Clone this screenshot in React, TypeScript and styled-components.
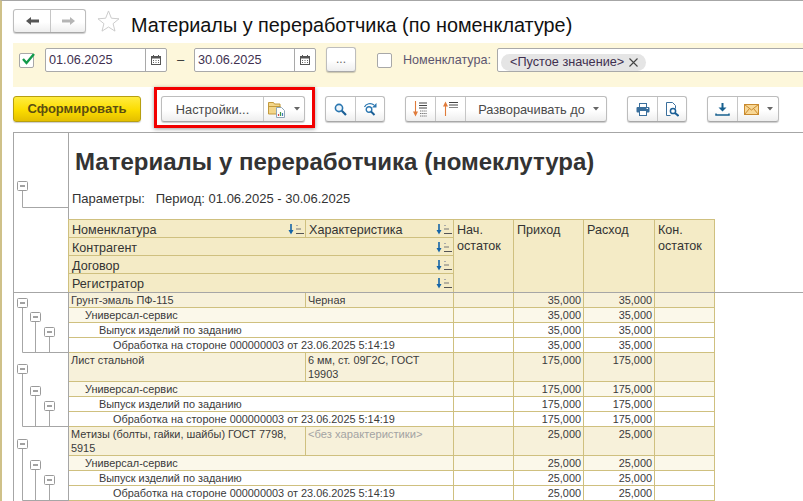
import React from "react";
import styled, { createGlobalStyle } from "styled-components";

const Global = createGlobalStyle`
  html, body { margin: 0; padding: 0; background: #fff; }
  body { font-family: "Liberation Sans", Arial, sans-serif; color: #333; }
  * { box-sizing: border-box; }
`;

const Page = styled.div`
  position: relative;
  width: 803px;
  height: 501px;
  overflow: hidden;
  background: #fff;
  border-top: 1px solid #a6a6a6;
  border-left: 2px solid #cfc189;
  display: flex;
  flex-direction: column;
`;
const TitleBar = styled.div`
  height: 42px;
  padding: 8px 0 0 11px;
  display: flex;
  align-items: flex-start;
`;
const Group = styled.div<{ $w: number; $ml?: number }>`
  position: relative;
  display: flex;
  flex: none;
  width: ${(p) => p.$w}px;
  height: 26px;
  margin-left: ${(p) => p.$ml ?? 0}px;
  border: 1px solid #bdbdbd;
  border-bottom-color: #a8a8a8;
  border-radius: 3px;
  background: linear-gradient(#fff, #fff 55%, #eeeeee);
  box-shadow: 0 1px 1px rgba(0, 0, 0, 0.2);
`;
const NavGroup = styled(Group)`
  height: 24px;
`;
const Seg = styled.div<{ $w?: number; $gap?: number; $pl?: number }>`
  ${(p) => (p.$w ? `width: ${p.$w}px; flex: none;` : "flex: 1;")}
  display: flex;
  align-items: center;
  justify-content: center;
  gap: ${(p) => p.$gap ?? 6}px;
  padding-left: ${(p) => p.$pl ?? 0}px;
  font-size: 12.8px;
  color: #4a4a4a;
  white-space: nowrap;
  & + & { border-left: 1px solid #c6c6c6; }
`;
const StarIcon = styled.svg`
  margin: 1px 0 0 11px;
  flex: none;
`;
const Title = styled.div`
  margin: 4px 0 0 11px;
  font-size: 19.84px;
  line-height: 24px;
  color: #111;
  white-space: nowrap;
`;
const FilterBar = styled.div`
  margin-left: 11px;
  height: 44px;
  background: #fdf7db;
  padding: 5px 0 0 6px;
  display: flex;
  align-items: flex-start;
`;
const CheckBox = styled.div<{ $ml?: number }>`
  width: 15px;
  height: 15px;
  margin: 5px 0 0 ${(p) => p.$ml ?? 0}px;
  flex: none;
  position: relative;
  border: 1px solid #a8a8a8;
  border-radius: 2px;
  background: #fff;
`;
const CheckMark = styled.svg`
  position: absolute;
  left: 1px;
  top: -2px;
`;
const DateInput = styled.div<{ $ml: number }>`
  width: 122px;
  height: 24px;
  margin-left: ${(p) => p.$ml}px;
  flex: none;
  display: flex;
  background: #fff;
  border: 1px solid #a9a9a9;
  border-radius: 2px;
`;
const DateText = styled.div`
  flex: 1;
  padding-left: 3px;
  font-size: 12.7px;
  line-height: 22px;
  color: #40304f;
`;
const CalBtn = styled.div`
  width: 21px;
  border-left: 1px solid #a9a9a9;
  display: flex;
  align-items: center;
  justify-content: center;
`;
const Dash = styled.div`
  width: 27px;
  flex: none;
  text-align: center;
  font-size: 13px;
  line-height: 24px;
  color: #333;
`;
const MoreBtn = styled(Group)`
  height: 25px;
  margin-top: -1px;
  justify-content: center;
  font-size: 12px;
  line-height: 22px;
  color: #666;
`;
const FieldLabel = styled.div`
  margin: 0 0 0 11px;
  width: 94px;
  flex: none;
  font-size: 12.6px;
  line-height: 24px;
  color: #5d5670;
  white-space: nowrap;
`;
const TextField = styled.div`
  flex: 1;
  height: 24px;
  margin-right: -4px;
  background: #fff;
  border: 1px solid #a9a9a9;
  border-radius: 2px;
  padding: 3px 0 0 3px;
`;
const Chip = styled.div`
  display: inline-flex;
  align-items: center;
  gap: 5px;
  height: 17px;
  width: 145px;
  padding-left: 9px;
  background: #e5e5e5;
  border-radius: 9px;
  font-size: 12.7px;
  color: #40304f;
  white-space: nowrap;
`;
const Toolbar = styled.div`
  height: 45px;
  margin-left: 11px;
  padding-top: 9px;
  display: flex;
  align-items: flex-start;
`;
const PrimaryButton = styled.div`
  width: 128px;
  height: 26px;
  flex: none;
  border: 1px solid #b79f10;
  border-radius: 3px;
  background: linear-gradient(#ffec3f, #fbdc00 55%, #e4bf00);
  color: #5b4d12;
  font-weight: bold;
  font-size: 13px;
  line-height: 24px;
  text-align: center;
  box-shadow: 0 1px 1px rgba(0, 0, 0, 0.2);
`;
const SettingsGroup = styled(Group)`
  &::after {
    content: "";
    position: absolute;
    inset: -10px -11px -7px -8px;
    border: 3.5px solid #f20000;
    box-shadow: 0 1px 4px rgba(0, 0, 0, 0.4);
    pointer-events: none;
  }
`;
const Report = styled.div`
  margin-left: 11px;
  flex: 1;
  border-top: 1px solid #a6a6a6;
  border-left: 1px solid #a6a6a6;
`;
const HeadSection = styled.div`
  display: flex;
  border-bottom: 1px solid #a6a6a6;
`;
const Gutter = styled.div`
  width: 55px;
  flex: none;
  border-right: 1px solid #a6a6a6;
  display: flex;
`;
const HeadMain = styled.div`
  flex: 1;
`;
const ReportTitleBlock = styled.div`
  height: 87px;
  padding: 14px 0 0 6px;
`;
const ReportTitle = styled.div`
  font-size: 24px;
  line-height: 30px;
  font-weight: bold;
  color: #333;
  white-space: nowrap;
`;
const Params = styled.div`
  margin: 14px 0 0 -3px;
  font-size: 13px;
  line-height: 16px;
  color: #333;
  white-space: pre;
`;
const HeaderGrid = styled.div`
  display: grid;
  grid-template-columns: 237px 148px 60px 70px 71px 60px;
  grid-template-rows: repeat(4, 18px);
  width: 647px;
  border-top: 1px solid #cfc07f;
  margin-top: -1px;
  border-left: 1px solid #cfc07f;
  margin-left: -1px;
  background: #f4ebc6;
`;
const HeadCell = styled.div<{ $span?: number; $rows?: number; $last?: boolean }>`
  grid-column: span ${(p) => p.$span ?? 1};
  grid-row: span ${(p) => p.$rows ?? 1};
  display: flex;
  align-items: flex-start;
  justify-content: space-between;
  padding: 2px 0 0 3px;
  border-right: 1px solid #cfc07f;
  border-bottom: ${(p) => (p.$last ? "0" : "1px solid #cfc07f")};
  font-size: 12.6px;
  line-height: 16px;
  color: #333;
  white-space: pre-line;
`;
const SortIcon = styled.svg`
  flex: none;
  margin: 2px 0 0 0;
`;
const DataGroup = styled.div`
  display: flex;
`;
const Rows = styled.div`
  width: 646px;
  flex: none;
`;
const Row = styled.div<{ $level: number; $h: number }>`
  display: grid;
  grid-template-columns: 237px 148px 60px 70px 71px 60px;
  height: ${(p) => p.$h}px;
  background: ${(p) => (p.$level === 0 ? "#f7f1da" : p.$level === 1 ? "#fbf8ea" : "#fff")};
  border-bottom: 1px solid #cfc07f;
`;
const Cell = styled.div<{ $span?: number; $indent?: number; $right?: boolean }>`
  grid-column: span ${(p) => p.$span ?? 1};
  border-right: 1px solid #cfc07f;
  padding: 0 2px 0 ${(p) => 2 + (p.$indent ?? 0)}px;
  font-size: 10.9px;
  line-height: 14px;
  text-align: ${(p) => (p.$right ? "right" : "left")};
  color: #3a3a3a;
  overflow: hidden;
`;
const CharCell = styled(Cell)<{ $muted?: boolean }>`
  padding: 0 4px 0 2px;
  font-size: ${(p) => (p.$muted ? 11.2 : 10.9)}px;
  color: ${(p) => (p.$muted ? "#a3a3a3" : "#3a3a3a")};
`;

const Arrow = ({ dir, color }: { dir: "l" | "r"; color: string }) => (
  <svg width="15" height="10" viewBox="0 0 15 10">
    <path
      d={dir === "l" ? "M1 5 L6 1 V3.5 H14 V6.5 H6 V9 Z" : "M14 5 L9 1 V3.5 H1 V6.5 H9 V9 Z"}
      fill={color}
    />
  </svg>
);
const Caret = () => (
  <svg width="6" height="4" viewBox="0 0 6 4">
    <path d="M0 0H6L3 3.5Z" fill="#666" />
  </svg>
);
const Calendar = () => (
  <svg width="10" height="10" viewBox="0 0 10 10">
    <rect x="0.5" y="1.5" width="9" height="8" fill="#fff" stroke="#555" />
    <rect x="0" y="1" width="10" height="2.5" fill="#555" />
    <path d="M2 5.5h1M4.5 5.5h1M7 5.5h1M2 7.5h1M4.5 7.5h1M7 7.5h1" stroke="#666" />
    <path d="M2.5 0v2M7.5 0v2" stroke="#555" />
  </svg>
);
const Sort = () => (
  <SortIcon width="17" height="11" viewBox="0 0 17 11">
    <path d="M3 0V7" stroke="#1565a8" strokeWidth="1.6" />
    <path d="M0.5 6H5.5L3 10.5Z" fill="#1565a8" />
    <path d="M8 1.5h2" stroke="#aaa" />
    <path d="M8 5h5" stroke="#777" />
    <path d="M8 9.5h8" stroke="#555" />
  </SortIcon>
);
const FolderDoc = () => (
  <svg width="18" height="17" viewBox="0 0 18 17">
    <path d="M0.5 3V1.5h5l1 1.5h5.5v10H0.5z" fill="#f3d68a" stroke="#c39a3d" />
    <path d="M0.5 5.5h12" stroke="#c39a3d" />
    <path d="M8.5 6.5h5l3 3v7h-8z" fill="#fff" stroke="#8fa6b8" />
    <path d="M10.5 15v-2" stroke="#d24a4a" strokeWidth="1.2" />
    <path d="M12.5 15v-4" stroke="#3f9a4a" strokeWidth="1.2" />
    <path d="M14.5 15v-3" stroke="#3d79b8" strokeWidth="1.2" />
  </svg>
);
const Search = () => (
  <svg width="13" height="13" viewBox="0 0 13 13">
    <circle cx="5" cy="5" r="3.6" fill="#eef5fb" stroke="#2a76b0" strokeWidth="1.6" />
    <path d="M7.8 7.8l4.2 4.2" stroke="#1b5f96" strokeWidth="2.2" />
  </svg>
);
const SearchCycle = () => (
  <svg width="15" height="14" viewBox="0 0 15 14">
    <circle cx="6" cy="7.5" r="2.8" fill="none" stroke="#2a76b0" strokeWidth="1.4" />
    <path d="M8 9.5l3.5 3.5" stroke="#1b5f96" strokeWidth="2" />
    <path d="M1.5 5c1.5-3.5 6.5-4.5 9.5-2" fill="none" stroke="#2a76b0" strokeWidth="1.2" />
    <path d="M13.5 1v4.5h-4.5z" fill="#2a76b0" />
  </svg>
);
const SortLevelsDown = () => (
  <svg width="15" height="16" viewBox="0 0 15 16">
    <path d="M2.5 0v12" stroke="#e07b3a" strokeWidth="1.1" />
    <path d="M0 10.5H5L2.5 15.5Z" fill="#e07b3a" />
    <path d="M6 2h8M6 4.5h8M6 7h8" stroke="#444" />
    <path d="M7 10h7M7 12.5h7M7 15h7" stroke="#777" strokeDasharray="1.4 0.7" />
  </svg>
);
const SortLevelsUp = () => (
  <svg width="15" height="16" viewBox="0 0 15 16">
    <path d="M2.5 15V4" stroke="#e07b3a" strokeWidth="1.1" />
    <path d="M0 5.5H5L2.5 0.5Z" fill="#e07b3a" />
    <path d="M6 1.5h9M6 4h9" stroke="#444" />
    <path d="M6 6.5h9" stroke="#888" />
  </svg>
);
const Printer = () => (
  <svg width="14" height="13" viewBox="0 0 14 13">
    <rect x="3.5" y="0.5" width="7" height="4" fill="#fff" stroke="#3a6f9c" />
    <rect x="0.5" y="4" width="13" height="5.5" rx="1" fill="#3a6f9c" />
    <rect x="3.5" y="7.5" width="7" height="5" fill="#fff" stroke="#3a6f9c" />
    <path d="M10.5 5.5h1.5" stroke="#fff" />
  </svg>
);
const Preview = () => (
  <svg width="14" height="15" viewBox="0 0 14 15">
    <path d="M1.5 0.5h6l3 3v3M5.5 13.5H1.5v-13" fill="#fff" stroke="#3a6f9c" />
    <circle cx="8" cy="9" r="2.6" fill="#fff" stroke="#1b5f96" strokeWidth="1.5" />
    <path d="M10 11l3.5 3" stroke="#1b5f96" strokeWidth="2" />
  </svg>
);
const Download = () => (
  <svg width="15" height="13" viewBox="0 0 15 13">
    <path d="M7.5 0v5" stroke="#17608f" strokeWidth="2" />
    <path d="M3.5 4.5h8l-4 4z" fill="#17608f" />
    <path d="M1 10.5v1.5h13v-1.5" fill="none" stroke="#17608f" strokeWidth="1.5" />
  </svg>
);
const Envelope = () => (
  <svg width="15" height="11" viewBox="0 0 15 11">
    <rect x="0.5" y="0.5" width="14" height="10" fill="#f8d795" stroke="#c98a2e" />
    <path d="M0.5 0.5l7 5.5 7-5.5M0.5 10.5l5-6M14.5 10.5l-5-6" fill="none" stroke="#c98a2e" />
  </svg>
);
const CloseX = () => (
  <svg width="9" height="9" viewBox="0 0 9 9">
    <path d="M0.5 0.5l8 8M8.5 0.5l-8 8" stroke="#444" strokeWidth="1.1" />
  </svg>
);

const LINE = "#a6a6a6";
const MinusBox = ({ x, y }: { x: number; y: number }) => (
  <g>
    <rect x={x + 0.5} y={y + 0.5} width="10" height="9" rx="1" fill="#fff" stroke="#9a9a9a" />
    <path d={`M${x + 3} ${y + 5}h5`} stroke="#444" />
  </g>
);

const Bracket = ({ h, boxes }: { h: number; boxes: number[] }) => {
  const xs = [3, 16, 30];
  return (
    <svg width="54" height={h} viewBox={`0 0 54 ${h}`}>
      {boxes.map((y, i) => (
        <path key={i} d={`M${xs[i] + 5.5} ${y}V${h - 0.5}`} stroke={LINE} fill="none" />
      ))}
      <path d={`M${xs[0] + 5.5} ${h - 0.5}H54`} stroke={LINE} fill="none" />
      {boxes.map((y, i) => (
        <MinusBox key={i} x={xs[i]} y={y} />
      ))}
    </svg>
  );
};

const HeadBracket = () => (
  <svg width="54" height="159" viewBox="0 0 54 159">
    <path d="M8.5 50V74.5H54" stroke={LINE} fill="none" />
    <MinusBox x={3} y={48} />
  </svg>
);

type Item = { name: string; chr?: string; muted?: boolean; a: string };
const DOC = "Обработка на стороне 000000003 от 23.06.2025 5:14:19";
const groups: { items: Item; h: number; boxes: number[] }[] = [
  { items: { name: "Грунт-эмаль ПФ-115", chr: "Черная", a: "35,000" }, h: 60, boxes: [5, 19, 34] },
  { items: { name: "Лист стальной", chr: "6 мм, ст. 09Г2С, ГОСТ 19903", a: "175,000" }, h: 74, boxes: [11, 33, 48] },
  {
    items: { name: "Метизы (болты, гайки, шайбы) ГОСТ 7798, 5915", chr: "<без характеристики>", muted: true, a: "25,000" },
    h: 74,
    boxes: [12, 33, 48],
  },
];

const Amounts = ({ a }: { a: string }) => (
  <>
    <Cell />
    <Cell $right>{a}</Cell>
    <Cell $right>{a}</Cell>
    <Cell />
  </>
);

export default function App() {
  return (
    <>
      <Global />
      <Page>
        <TitleBar>
          <NavGroup $w={73}>
            <Seg $w={36}>
              <Arrow dir="l" color="#555" />
            </Seg>
            <Seg>
              <Arrow dir="r" color="#b5b5b5" />
            </Seg>
          </NavGroup>
          <StarIcon width="23" height="22" viewBox="0 0 24 23">
            <path
              d="M12 1l3 7.6 8 .6-6.2 5.1 2 7.8-6.8-4.3-6.8 4.3 2-7.8L1 9.2l8-.6z"
              fill="#fff"
              stroke="#c9c9c9"
            />
          </StarIcon>
          <Title>Материалы у переработчика (по номенклатуре)</Title>
        </TitleBar>
        <FilterBar>
          <CheckBox>
            <CheckMark width="15" height="15" viewBox="0 0 15 15">
              <path d="M2 7l3.5 4L13 2" fill="none" stroke="#129a4a" strokeWidth="2.4" />
            </CheckMark>
          </CheckBox>
          <DateInput $ml={11}>
            <DateText>01.06.2025</DateText>
            <CalBtn>
              <Calendar />
            </CalBtn>
          </DateInput>
          <Dash>–</Dash>
          <DateInput $ml={0}>
            <DateText>30.06.2025</DateText>
            <CalBtn>
              <Calendar />
            </CalBtn>
          </DateInput>
          <MoreBtn $w={30} $ml={10}>...</MoreBtn>
          <CheckBox $ml={21} />
          <FieldLabel>Номенклатура:</FieldLabel>
          <TextField>
            <Chip>
              &lt;Пустое значение&gt;
              <CloseX />
            </Chip>
          </TextField>
        </FilterBar>
        <Toolbar>
          <PrimaryButton>Сформировать</PrimaryButton>
          <SettingsGroup $w={144} $ml={20}>
            <Seg $w={101}>Настройки...</Seg>
            <Seg $gap={8}>
              <FolderDoc />
              <Caret />
            </Seg>
          </SettingsGroup>
          <Group $w={60} $ml={20}>
            <Seg $w={29}>
              <Search />
            </Seg>
            <Seg>
              <SearchCycle />
            </Seg>
          </Group>
          <Group $w={202} $ml={20}>
            <Seg $w={29}>
              <SortLevelsDown />
            </Seg>
            <Seg $w={30}>
              <SortLevelsUp />
            </Seg>
            <Seg $gap={8} $pl={5}>
              Разворачивать до
              <Caret />
            </Seg>
          </Group>
          <Group $w={60} $ml={20}>
            <Seg $w={29}>
              <Printer />
            </Seg>
            <Seg>
              <Preview />
            </Seg>
          </Group>
          <Group $w={72} $ml={20}>
            <Seg $w={29}>
              <Download />
            </Seg>
            <Seg $gap={8}>
              <Envelope />
              <Caret />
            </Seg>
          </Group>
        </Toolbar>
        <Report>
          <HeadSection>
            <Gutter>
              <HeadBracket />
            </Gutter>
            <HeadMain>
              <ReportTitleBlock>
                <ReportTitle>Материалы у переработчика (номеклутура)</ReportTitle>
                <Params>{"Параметры:   Период: 01.06.2025 - 30.06.2025"}</Params>
              </ReportTitleBlock>
              <HeaderGrid>
                <HeadCell>
                  Номенклатура
                  <Sort />
                </HeadCell>
                <HeadCell>
                  Характеристика
                  <Sort />
                </HeadCell>
                <HeadCell $rows={4} $last>{"Нач.\nостаток"}</HeadCell>
                <HeadCell $rows={4} $last>Приход</HeadCell>
                <HeadCell $rows={4} $last>Расход</HeadCell>
                <HeadCell $rows={4} $last>{"Кон.\nостаток"}</HeadCell>
                <HeadCell $span={2}>
                  Контрагент
                  <Sort />
                </HeadCell>
                <HeadCell $span={2}>
                  Договор
                  <Sort />
                </HeadCell>
                <HeadCell $span={2} $last>
                  Регистратор
                  <Sort />
                </HeadCell>
              </HeaderGrid>
            </HeadMain>
          </HeadSection>
          {groups.map((g, i) => (
            <DataGroup key={i}>
              <Gutter>
                <Bracket h={g.h} boxes={g.boxes} />
              </Gutter>
              <Rows>
                <Row $level={0} $h={i === 0 ? 15 : 29}>
                  <Cell>{g.items.name}</Cell>
                  <CharCell $muted={g.items.muted}>{g.items.chr}</CharCell>
                  <Amounts a={g.items.a} />
                </Row>
                <Row $level={1} $h={15}>
                  <Cell $span={2} $indent={14}>Универсал-сервис</Cell>
                  <Amounts a={g.items.a} />
                </Row>
                <Row $level={2} $h={15}>
                  <Cell $span={2} $indent={28}>Выпуск изделий по заданию</Cell>
                  <Amounts a={g.items.a} />
                </Row>
                <Row $level={3} $h={15}>
                  <Cell $span={2} $indent={42}>{DOC}</Cell>
                  <Amounts a={g.items.a} />
                </Row>
              </Rows>
            </DataGroup>
          ))}
        </Report>
      </Page>
    </>
  );
}
